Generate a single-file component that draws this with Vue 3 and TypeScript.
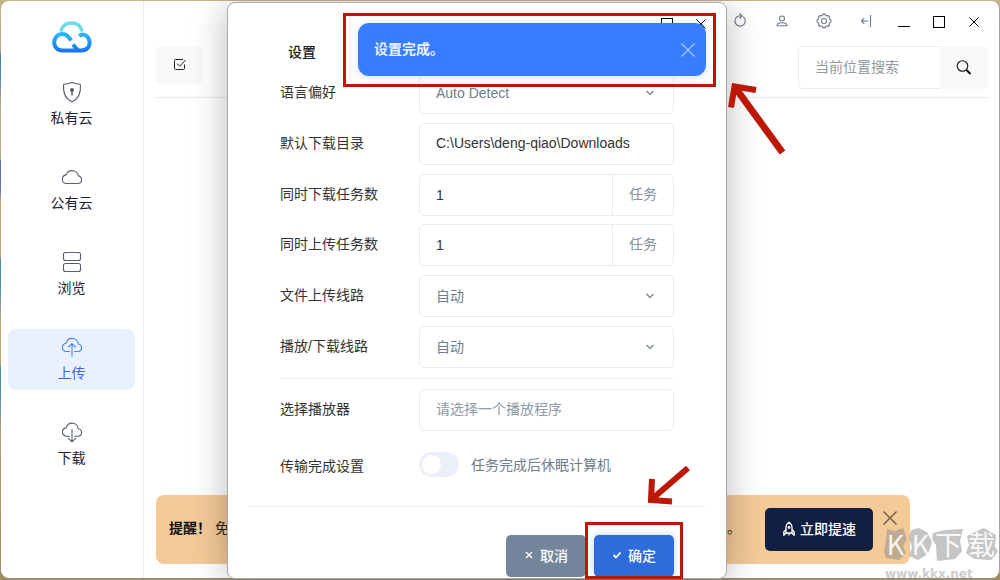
<script setup lang="ts">
import { ref } from 'vue'

type NavIcon = 'shield' | 'cloud' | 'browse' | 'upload' | 'download'

const navItems: { label: string; icon: NavIcon }[] = [
  { label: '私有云', icon: 'shield' },
  { label: '公有云', icon: 'cloud' },
  { label: '浏览', icon: 'browse' },
  { label: '上传', icon: 'upload' },
  { label: '下载', icon: 'download' },
]
const active = ref('上传')

const language = ref('Auto Detect')
const folder = ref('C:\\Users\\deng-qiao\\Downloads')
const downloads = ref('1')
const uploads = ref('1')
const uploadRoute = ref('自动')
const playRoute = ref('自动')
const player = ref('')
const sleepAfter = ref(false)
const keyword = ref('')
</script>

<template>
  <div class="desktop">
    <div class="window">
      <nav class="sidebar">
        <svg class="logo" width="40" height="34" viewBox="0 0 40 34" fill="none" stroke-width="4">
          <defs>
            <linearGradient id="logo-blue" x1="0" y1="12" x2="0" y2="33" gradientUnits="userSpaceOnUse">
              <stop offset="0" stop-color="#2cc0fb" />
              <stop offset="1" stop-color="#1a6cf0" />
            </linearGradient>
          </defs>
          <path d="M9 11.500C10 6 14 3 19.500 3S29 6 30 11.500" stroke="#6bdce9" stroke-width="3.500" />
          <path d="M19.300 20.400L16.500 17C13.500 13 7.500 13.200 4.500 16.600C-.2 22.500 3 30.500 10.500 30.500H29C35 30.500 38.200 26.500 37.500 21.500C36.500 15 31 13 27.200 16" stroke="url(#logo-blue)" />
          <path d="M21 24.500L26 30.500" stroke="url(#logo-blue)" />
        </svg>
        <button
          v-for="item in navItems"
          :key="item.label"
          type="button"
          class="nav-item"
          :class="{ active: active === item.label }"
          @click="active = item.label"
        >
          <svg width="22" height="22" viewBox="0 0 22 22" fill="none" stroke="currentColor" stroke-width="1.1" stroke-linecap="round" stroke-linejoin="round">
            <template v-if="item.icon === 'shield'">
              <path d="M11 1.500C8.500 2.600 5.600 3.200 2.600 3.200C2 10.500 3.600 17.500 11 20.700C18.400 17.500 20 10.500 19.400 3.200C16.400 3.200 13.500 2.600 11 1.500Z" />
              <circle cx="11" cy="9" r="1.500" fill="currentColor" />
              <path d="M11 9.500V14" stroke-width="1.500" />
            </template>
            <path v-else-if="item.icon === 'cloud'" d="M5.500 17.500H16.500C19 17.500 20.600 15.800 20.600 13.700C20.600 11.800 19.200 10.200 17.200 9.900C16.900 6.800 14.200 4.600 11 4.600C8.200 4.600 6 6.300 5.100 8.900C2.900 9.300 1.400 11.100 1.400 13.200C1.400 15.600 3.200 17.500 5.500 17.500Z" />
            <template v-else-if="item.icon === 'browse'">
              <rect x="2.500" y="1.500" width="17" height="8" rx="2" />
              <rect x="2.500" y="12.500" width="17" height="8" rx="2" />
            </template>
            <template v-else-if="item.icon === 'upload'">
              <path d="M8.500 15.500H5.500C3.200 15.500 1.400 13.700 1.400 11.400C1.400 9.300 2.900 7.600 5.100 7.200C6 4.200 8.200 2.400 11 2.400C14.200 2.400 16.900 4.700 17.200 8C19.200 8.300 20.600 9.900 20.600 11.800C20.600 13.900 19 15.500 16.500 15.500H13.500" />
              <path d="M11 20.300V8M7.700 11L11 7.700L14.300 11" />
            </template>
            <template v-else>
              <path d="M8.500 15.200H5.500C3.200 15.200 1.400 13.400 1.400 11.100C1.400 9 2.900 7.300 5.100 6.900C6 3.900 8.200 2.100 11 2.100C14.200 2.100 16.900 4.400 17.200 7.700C19.200 8 20.600 9.600 20.600 11.500C20.600 13.600 19 15.200 16.500 15.200H13.500" />
              <path d="M11 8.500V20.700M7.400 17.300L11 20.800L14.600 17.300" />
            </template>
          </svg>
          <span>{{ item.label }}</span>
        </button>
      </nav>

      <main class="main">
        <header class="topbar">
          <div class="tools">
            <button type="button" aria-label="刷新">
              <svg width="18" height="18" viewBox="0 0 18 18" fill="none" stroke="currentColor" stroke-width="1.1"><path d="M12 4.600A5.200 5.200 0 1 1 7.500 4H10.800" /><path d="M8.500 1.500L11 4L8.500 6.500" /></svg>
            </button>
            <button type="button" aria-label="用户">
              <svg width="18" height="18" viewBox="0 0 18 18" fill="none" stroke="currentColor" stroke-width="1.100"><circle cx="9" cy="6.500" r="2.500" /><path d="M4 13.700C4 11.800 5.600 10.800 9 10.800S14 11.800 14 13.700Z" stroke-linejoin="round" /></svg>
            </button>
            <button type="button" aria-label="设置">
              <svg width="18" height="18" viewBox="0 0 18 18" fill="none" stroke="currentColor" stroke-width="1.100" stroke-linejoin="round"><path d="M7.600 3.200L8 2.100H10L10.400 3.200L12.100 3.900L13.200 3.400L14.600 4.800L14.100 5.900L14.800 7.600L15.900 8V10L14.800 10.400L14.100 12.100L14.600 13.200L13.200 14.600L12.100 14.100L10.400 14.800L10 15.900H8L7.600 14.800L5.900 14.100L4.800 14.600L3.400 13.200L3.900 12.100L3.200 10.400L2.100 10V8L3.200 7.600L3.900 5.900L3.400 4.800L4.800 3.400L5.900 3.900Z" /><circle cx="9" cy="9" r="2.500" /></svg>
            </button>
            <button type="button" aria-label="退出">
              <svg width="18" height="18" viewBox="0 0 18 18" fill="none" stroke="currentColor" stroke-width="1.100"><path d="M13.500 3V15M11 9H4.500M7.200 6.200L4.400 9L7.200 11.800" /></svg>
            </button>
          </div>
          <div class="window-buttons">
            <button type="button" aria-label="最小化">
              <svg width="14" height="14" viewBox="0 0 14 14" stroke="#000"><path d="M1 12.500H13" /></svg>
            </button>
            <button type="button" aria-label="最大化">
              <svg width="14" height="14" viewBox="0 0 14 14" fill="none" stroke="#000"><rect x="1.500" y="2.500" width="11" height="11" /></svg>
            </button>
            <button type="button" aria-label="关闭">
              <svg width="14" height="14" viewBox="0 0 14 14" stroke="#000"><path d="M2.500 3.500L11.500 12.500M11.500 3.500L2.500 12.500" /></svg>
            </button>
          </div>
        </header>
        <div class="toolbar">
          <button type="button" class="select-all" aria-label="全选">
            <svg width="14" height="14" viewBox="0 0 14 14" fill="none" stroke="#222"><path d="M10 1.500H2.500A1 1 0 0 0 1.500 2.500V10.500A1 1 0 0 0 2.500 11.500H10.500A1 1 0 0 0 11.500 10.500V6.500" /><path d="M4.200 5.700L6.700 8.200L12.600 2" /></svg>
          </button>
          <form class="search" @submit.prevent>
            <input v-model="keyword" type="text" placeholder="当前位置搜索" aria-label="当前位置搜索" />
            <button type="submit" aria-label="搜索">
              <svg width="18" height="18" viewBox="0 0 18 18" fill="none" stroke="#111"><circle cx="7.500" cy="7" r="5.300" stroke-width="1.100" /><path d="M11.500 11L15.500 15" stroke-width="1.900" /></svg>
            </button>
          </form>
        </div>
        <section class="banner">
          <strong>提醒！</strong>
          <span class="banner-text">免</span>
          <span class="banner-end">。</span>
          <button type="button" class="boost">
            <svg width="14" height="16" viewBox="0 0 14 16" fill="none" stroke="#fff" stroke-width="1.300" stroke-linejoin="round"><path d="M4 12V6.500C4 4 5.300 2.300 7 1.200C8.700 2.300 10 4 10 6.500V12Z" /><path d="M4 8.500L1.800 11V14.300L4.300 12M10 8.500L12.200 11V14.300L9.700 12" /><circle cx="7" cy="6.500" r=".8" /><path d="M7 12V14.500" /></svg>
            立即提速
          </button>
          <button type="button" class="banner-close" aria-label="关闭提醒">
            <svg width="16" height="16" viewBox="0 0 16 16" stroke="#6f5a40" stroke-width="1.400"><path d="M1.500 1.500L14.500 14.500M14.500 1.500L1.500 14.500" /></svg>
          </button>
        </section>
      </main>
    </div>

    <section class="dialog" role="dialog" aria-labelledby="dialog-title">
      <header class="dialog-head">
        <div class="dialog-controls">
          <button type="button" aria-label="最大化">
            <svg width="14" height="14" viewBox="0 0 14 14" fill="none" stroke="#000"><rect x="1.500" y="3.500" width="11" height="10" /></svg>
          </button>
          <button type="button" aria-label="关闭">
            <svg width="14" height="14" viewBox="0 0 14 14" stroke="#000"><path d="M2.500 4.500L11.500 13.500M11.500 4.500L2.500 13.500" /></svg>
          </button>
        </div>
        <h1 id="dialog-title">设置</h1>
      </header>
      <div class="form">
        <div class="group">
          <div class="row">
            <label for="language">语言偏好</label>
            <div class="select-box">
              <select id="language" v-model="language"><option>Auto Detect</option></select>
              <svg width="10" height="10" viewBox="0 0 10 10" fill="none" stroke="#6d7f92" stroke-width="1.200"><path d="M1.500 3L5 6.500L8.500 3" /></svg>
            </div>
          </div>
          <div class="row">
            <label for="folder">默认下载目录</label>
            <input id="folder" v-model="folder" type="text" class="field" />
          </div>
          <div class="row">
            <label for="downloads">同时下载任务数</label>
            <div class="field unit-field">
              <input id="downloads" v-model="downloads" type="text" inputmode="numeric" />
              <span>任务</span>
            </div>
          </div>
          <div class="row">
            <label for="uploads">同时上传任务数</label>
            <div class="field unit-field">
              <input id="uploads" v-model="uploads" type="text" inputmode="numeric" />
              <span>任务</span>
            </div>
          </div>
          <div class="row">
            <label for="upload-route">文件上传线路</label>
            <div class="select-box">
              <select id="upload-route" v-model="uploadRoute"><option>自动</option></select>
              <svg width="10" height="10" viewBox="0 0 10 10" fill="none" stroke="#6d7f92" stroke-width="1.200"><path d="M1.500 3L5 6.500L8.500 3" /></svg>
            </div>
          </div>
          <div class="row">
            <label for="play-route">播放/下载线路</label>
            <div class="select-box">
              <select id="play-route" v-model="playRoute"><option>自动</option></select>
              <svg width="10" height="10" viewBox="0 0 10 10" fill="none" stroke="#6d7f92" stroke-width="1.200"><path d="M1.500 3L5 6.500L8.500 3" /></svg>
            </div>
          </div>
        </div>
        <hr />
        <div class="row">
          <label for="player">选择播放器</label>
          <input id="player" v-model="player" type="text" class="field" placeholder="请选择一个播放程序" />
        </div>
        <div class="row switch-row">
          <span>传输完成设置</span>
          <label class="switch-label">
            <input v-model="sleepAfter" type="checkbox" class="switch" />
            任务完成后休眠计算机
          </label>
        </div>
      </div>
      <footer class="dialog-foot">
        <button type="button" class="cancel">
          <svg width="10" height="10" viewBox="0 0 10 10" fill="none" stroke="#fff" stroke-width="1.400"><path d="M2 1L8 7M8 1L2 7" /></svg>
          取消
        </button>
        <button type="button" class="ok">
          <svg width="10" height="10" viewBox="0 0 10 10" fill="none" stroke="#fff" stroke-width="1.800"><path d="M1.500 4L4 6.500L8.500 1.500" /></svg>
          确定
        </button>
      </footer>
    </section>

    <div class="toast" role="status">
      <span>设置完成。</span>
      <button type="button" aria-label="关闭提示">
        <svg width="16" height="16" viewBox="0 0 16 16" stroke="#a9c8ff" stroke-width="1.300"><path d="M1.500 1.500L14.500 14.500M14.500 1.500L1.500 14.500" /></svg>
      </button>
    </div>

    <div class="mark mark-toast"></div>
    <div class="mark mark-ok"></div>
    <svg class="arrow arrow-toast" width="58" height="74" viewBox="0 0 58 74" fill="none" stroke="#bc1707" stroke-width="6"><path d="M3 26.500L6.500 5.500L28 9" /><path d="M7.500 7L54.500 71.500" stroke-width="7" /></svg>
    <svg class="arrow arrow-ok" width="46" height="40" viewBox="0 0 46 40" fill="none" stroke="#bc1707" stroke-width="6"><path d="M7 14L6 35L27 36.500" /><path d="M7 34L43 3" stroke-width="6" /></svg>

    <div class="watermark">
      <svg width="116" height="36" viewBox="0 0 116 36" fill="#8b8b8b" fill-opacity=".5"><path d="M4 2L12 4L20 1L24 12L20 19L23 26L16 33L3 31L1 24L3 14Z" /><path d="M28 3L36 1L44 5L49 15L45 27L35 33L26 29L29 20L26 11Z" /><path d="M50 6L62 3L80 2L77 14L79 24L72 32L54 34L53 18L49 12Z" /><path d="M84 9L94 4L101 1L113 8L112 19L115 25L108 33L91 32L83 26L86 18Z" /></svg>
      <span class="brand"><span>K</span><span>K</span><span>下</span><span>载</span></span>
      <span class="site">www.kkx.net</span>
    </div>
  </div>
</template>

<style>
body {
  margin: 0;
}
</style>

<style scoped>
* {
  box-sizing: border-box;
}
.desktop {
  position: relative;
  display: flex;
  min-height: 100vh;
  padding: 1px 0 2px 1px;
  overflow: hidden;
  background: linear-gradient(180deg, #c6b48a 0, #b8a680 52px, #4d7da8 54px, #5a86a8 78px, #b9aa88 106px, #b9aa88 158px, #4a6ea0 162px, #5c7fa8 190px, #b9a67c 200px, #b9a67c 256px, #4a8aa0 260px, #5590a0 290px, #b9a67c 320px, #b9a67c 364px, #4a8aa0 368px, #5590a0 398px, #b0a078 430px, #a08c60 100%);
  font-family: "Liberation Sans", "Noto Sans CJK SC", sans-serif;
  font-size: 14px;
  line-height: 20px;
  color: #333;
}
button {
  display: flex;
  align-items: center;
  justify-content: center;
  padding: 0;
  border: 0;
  background: none;
  color: inherit;
  font: inherit;
}
input,
select {
  min-width: 0;
  margin: 0;
  border: 0;
  outline: 0;
  background: none;
  color: inherit;
  font: inherit;
}
.window {
  flex: 1;
  display: flex;
  border-right: 1px solid #a5a5a5;
  border-radius: 8px;
  background: #fff;
}
.sidebar {
  display: flex;
  flex-direction: column;
  align-items: stretch;
  gap: 24px;
  width: 143px;
  padding: 19px 8px 0 7px;
  border-right: 1px solid #ececf0;
}
.logo {
  align-self: center;
  margin-bottom: -4px;
}
.nav-item {
  flex-direction: column;
  gap: 5px;
  height: 61px;
  border-radius: 8px;
  color: #555d75;
}
.nav-item span {
  color: #1d2033;
}
.nav-item.active {
  background: #e9f1ff;
  color: #4a83e8;
}
.nav-item.active span {
  color: #3f66d9;
}
.main {
  flex: 1;
  display: flex;
  flex-direction: column;
  min-width: 0;
  padding: 0 11px 14px 12px;
}
.topbar {
  display: flex;
  align-items: center;
  justify-content: flex-end;
  gap: 22px;
  height: 40px;
  padding-right: 7px;
}
.tools {
  display: flex;
  gap: 24px;
  color: #6d7888;
}
.window-buttons {
  display: flex;
  gap: 21px;
}
.toolbar {
  display: flex;
  align-items: flex-start;
  justify-content: space-between;
  padding: 5px 0 8px;
  border-bottom: 1px solid #e9eaee;
}
.select-all {
  width: 47px;
  height: 38px;
  border-radius: 5px;
  background: #f8f9fb;
}
.search {
  display: flex;
  width: 190px;
  height: 43px;
  border-radius: 5px;
  background: #f8f9fb;
}
.search input {
  flex: 1;
  padding: 0 16px 2px;
  border: 1px solid #ebebee;
  border-right: 0;
  border-radius: 5px 0 0 5px;
  background: #fff;
}
.search button {
  width: 48px;
}
input::placeholder {
  color: #8f9aa4;
  opacity: 1;
}
.banner {
  display: flex;
  align-items: center;
  height: 69px;
  margin: auto 78px 0 0;
  padding: 0 12px 0 13px;
  border-radius: 8px;
  background: #f4ca98;
  color: #2c2419;
}
.banner strong,
.banner span {
  padding-bottom: 4px;
}
.banner strong {
  color: #111;
}
.banner-text {
  margin-left: 4px;
}
.banner-end {
  margin-left: auto;
}
.boost {
  gap: 4px;
  width: 108px;
  height: 43px;
  margin-left: 24px;
  padding-bottom: 2px;
  border-radius: 5px;
  background: #131f42;
  color: #fff;
  font-weight: 500;
}
.banner-close {
  align-self: flex-start;
  margin: 15px 0 0 9px;
}
.dialog {
  position: absolute;
  inset: 2px 273px 1px 227px;
  display: flex;
  flex-direction: column;
  border: 1px solid #aaa;
  border-radius: 8px;
  background: #fff;
  box-shadow: 0 4px 36px rgba(0, 0, 0, 0.28);
}
.dialog-head {
  height: 69px;
  padding: 12px 18px 0 60px;
}
.dialog-controls {
  display: flex;
  justify-content: flex-end;
  gap: 20px;
}
.dialog-head h1 {
  margin: 13px 0 0;
  font-size: 14px;
  font-weight: 500;
  line-height: 20px;
  color: #222;
}
.form {
  flex: 1;
  display: flex;
  flex-direction: column;
  padding: 0 52px;
}
.group {
  flex: 1;
  display: flex;
  flex-direction: column;
  justify-content: space-between;
}
.row {
  display: grid;
  grid-template-columns: 139px minmax(0, 1fr);
  align-items: center;
}
.row > label {
  padding-bottom: 2px;
}
.form hr {
  width: 100%;
  margin: 10px 0;
  border: 0;
  border-top: 1px solid #ebebee;
}
.field,
.select-box {
  width: 100%;
  height: 42px;
  border: 1px solid #ebebee;
  border-radius: 5px;
}
input.field {
  padding: 0 16px 2px;
}
.select-box {
  display: flex;
  align-items: center;
  padding-right: 18px;
  color: #6f7d8d;
}
.select-box select {
  flex: 1;
  height: 40px;
  padding: 0 16px;
  appearance: none;
}
.unit-field {
  display: flex;
}
.unit-field input {
  flex: 1;
  padding: 0 16px;
}
.unit-field span {
  display: flex;
  align-items: center;
  padding: 0 16px 2px;
  border-left: 1px solid #ebebee;
  color: #8591a0;
}
.switch-row {
  height: 69px;
}
.switch-label {
  display: flex;
  align-items: center;
  gap: 12px;
  color: #6f7d8d;
}
.switch {
  display: flex;
  align-items: center;
  width: 40px;
  height: 25px;
  padding: 3px;
  border-radius: 13px;
  background: #ebeff7;
  appearance: none;
}
.switch::before {
  width: 19px;
  height: 19px;
  border-radius: 50%;
  background: #fff;
  content: "";
}
.switch:checked {
  justify-content: flex-end;
  background: #387dff;
}
.dialog-foot {
  display: flex;
  justify-content: flex-end;
  gap: 8px;
  margin: 6px 20px 0;
  padding: 28px 32px 1px 0;
  border-top: 1px solid #ebebee;
}
.dialog-foot button {
  gap: 6px;
  width: 80px;
  height: 42px;
  border-radius: 5px;
  color: #fff;
  font-weight: 500;
}
.dialog-foot .cancel {
  background: #74869c;
}
.dialog-foot .ok {
  background: #2e6bdb;
  box-shadow: 0 0 8px rgba(46, 107, 219, 0.3);
}
.toast {
  position: absolute;
  top: 23px;
  left: 358px;
  right: 294px;
  display: flex;
  align-items: center;
  justify-content: space-between;
  height: 53px;
  padding: 0 10px 0 16px;
  border-radius: 11px;
  background: #387dff;
  box-shadow: 0 2px 10px rgba(56, 125, 255, 0.2);
  color: #e9f3ff;
  font-weight: 700;
}
.toast span {
  padding-bottom: 2px;
}
.mark {
  position: absolute;
  border: 3px solid #bc1707;
  pointer-events: none;
}
.mark-toast {
  inset: 13px 284px auto 343px;
  height: 74px;
}
.mark-ok {
  inset: auto 317px 1px 585px;
  height: 57px;
}
.arrow {
  position: absolute;
  overflow: visible;
  pointer-events: none;
}
.arrow-toast {
  top: 81px;
  right: 214px;
}
.arrow-ok {
  right: 309px;
  bottom: 75px;
}
.watermark {
  position: absolute;
  right: 0;
  bottom: 0;
  display: grid;
  row-gap: 5px;
  width: 117px;
  pointer-events: none;
}
.watermark svg,
.watermark .brand {
  grid-area: 1 / 1;
}
.watermark .brand {
  display: grid;
  grid-template-columns: 25px 25px 31px 35px;
  font-family: "Noto Sans CJK SC", sans-serif;
  font-size: 27px;
  line-height: 34px;
  text-align: center;
  color: rgba(255, 255, 255, 0.9);
}
.watermark .site {
  padding-left: 2px;
  font-family: "DejaVu Sans", sans-serif;
  font-size: 12px;
  font-weight: 700;
  line-height: 12px;
  color: #cdcdcd;
}
</style>
